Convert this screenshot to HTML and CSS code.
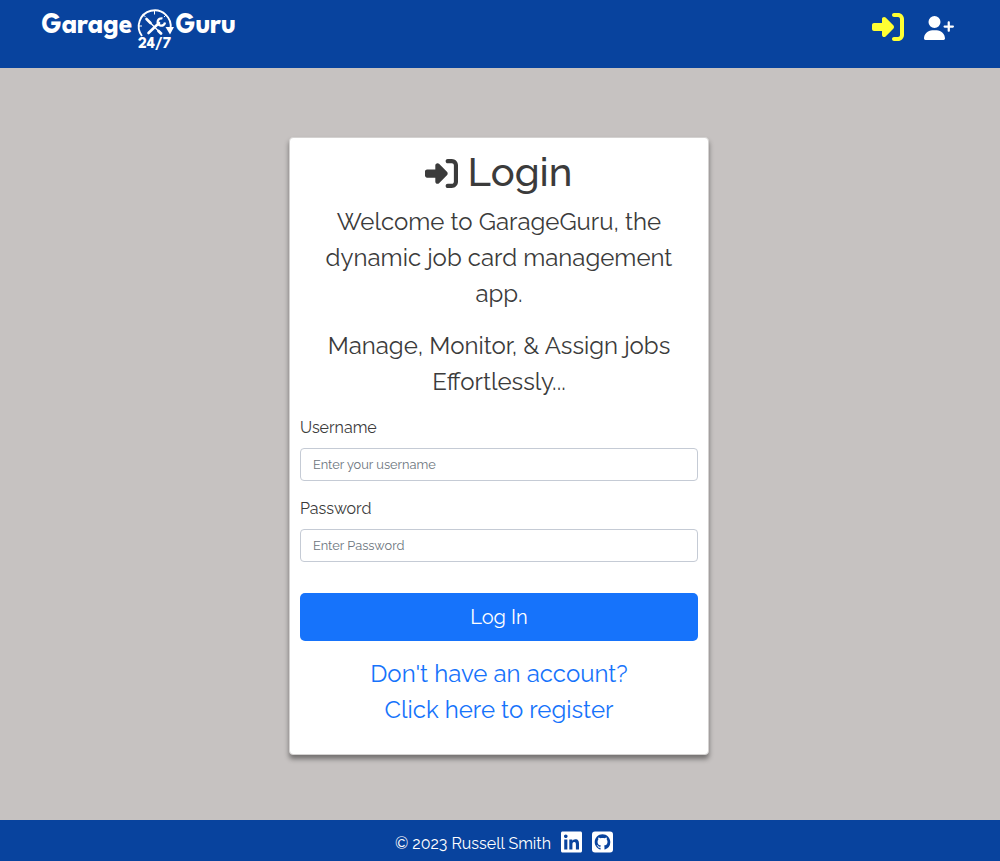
FILE: index.html
```html
<!DOCTYPE html>
<html lang="en">
<head>
<meta charset="utf-8">
<title>GarageGuru - Login</title>
<link rel="stylesheet" href="styles.css">
</head>
<body>
<svg width="0" height="0" class="defs">
  <symbol id="login-icon" viewBox="0 0 512 512"><path d="M217.9 105.9L340.7 228.7c7.2 7.2 11.3 17.1 11.3 27.3s-4.1 20.1-11.3 27.3L217.9 406.1c-6.4 6.4-15 9.9-24 9.9c-18.7 0-33.9-15.2-33.9-33.9l0-62.1L32 320c-17.7 0-32-14.3-32-32l0-64c0-17.7 14.3-32 32-32l128 0 0-62.1c0-18.7 15.2-33.9 33.9-33.9c9 0 17.6 3.6 24 9.9zM352 416l64 0c17.7 0 32-14.3 32-32l0-256c0-17.7-14.3-32-32-32l-64 0c-17.7 0-32-14.3-32-32s14.3-32 32-32l64 0c53 0 96 43 96 96l0 256c0 53-43 96-96 96l-64 0c-17.7 0-32-14.3-32-32s14.3-32 32-32z"/></symbol>
</svg>
<header class="topbar">
  <a class="logo" href="#" aria-label="Garage Guru 24/7">
    <svg width="200" height="54" viewBox="0 0 200 54">
      <g class="logo-word">
        <text x="0.500" y="32.500" textLength="91" lengthAdjust="spacingAndGlyphs">Garage</text>
        <text x="134.500" y="32.500" textLength="60.500" lengthAdjust="spacingAndGlyphs">Guru</text>
      </g>
      <text class="logo-hours" x="97" y="47.500" textLength="33" lengthAdjust="spacingAndGlyphs">24/7</text>
      <g fill="none" stroke="#fff">
        <path d="M101 36A16 16 0 1 1 129.500 29" stroke-width="1.900"/>
        <path d="M113.500 11v3.500M98 26h3M102.500 15l2 2M125 15l-2 2" stroke-width="1"/>
        <path d="M107 20.500L119.500 33" stroke-width="1.200"/>
        <path d="M105.500 19l4 4" stroke-width="2.600" stroke-linecap="round"/>
        <path d="M117.500 31l2.500 2.500" stroke-width="2.800" stroke-linecap="round"/>
        <path d="M107.500 33L118 23" stroke-width="2.600" stroke-linecap="round"/>
        <path d="M121.500 18.500a3.700 3.700 0 1 0 2.500 4" stroke-width="2.300"/>
      </g>
      <path d="M124.500 27h8.500l-4 7.500z" fill="#fff"/>
    </svg>
  </a>
  <nav class="nav">
    <a href="#" class="active" aria-label="Log in"><svg width="32" height="32"><use href="#login-icon"/></svg></a>
    <a href="#" class="signup" aria-label="Register"><svg width="30" height="24" viewBox="0 0 640 512"><path d="M96 128a128 128 0 1 1 256 0A128 128 0 1 1 96 128zM0 482.300C0 383.800 79.800 304 178.300 304h91.400C368.200 304 448 383.800 448 482.300c0 16.400-13.300 29.700-29.700 29.700H29.700C13.300 512 0 498.700 0 482.300zM504 312V248H440c-13.300 0-24-10.700-24-24s10.700-24 24-24h64V136c0-13.300 10.700-24 24-24s24 10.700 24 24v64h64c13.300 0 24 10.700 24 24s-10.700 24-24 24H552v64c0 13.300-10.700 24-24 24s-24-10.700-24-24z"/></svg></a>
  </nav>
</header>
<main class="page">
  <section class="card">
    <h1 class="title"><svg width="33" height="33"><use href="#login-icon"/></svg><span>Login</span></h1>
    <p class="lead">Welcome to GarageGuru, the dynamic job card management app.</p>
    <p class="lead">Manage, Monitor, &amp; Assign jobs Effortlessly...</p>
    <form>
      <label for="user">Username</label>
      <input id="user" type="text" placeholder="Enter your username">
      <label for="pass">Password</label>
      <input id="pass" type="password" placeholder="Enter Password">
      <button type="button">Log In</button>
    </form>
    <a class="register" href="#">Don't have an account?<br>Click here to register</a>
  </section>
</main>
<footer class="footer">
  <span class="copy">© 2023 Russell Smith</span>
  <a href="#" aria-label="LinkedIn"><svg width="21" height="24" viewBox="0 0 448 512"><path d="M416 32H31.900C14.300 32 0 46.500 0 64.300v383.400C0 465.500 14.300 480 31.900 480H416c17.600 0 32-14.500 32-32.300V64.300c0-17.800-14.400-32.300-32-32.300zM135.400 416H69V202.200h66.500V416zm-33.200-243c-21.300 0-38.500-17.300-38.500-38.500S80.900 96 102.200 96c21.200 0 38.500 17.300 38.500 38.500 0 21.300-17.200 38.500-38.500 38.500zm282.100 243h-66.400V312c0-24.800-.5-56.700-34.500-56.700-34.600 0-39.900 27-39.900 54.900V416h-66.400V202.200h63.700v29.200h.9c8.900-16.800 30.600-34.500 62.900-34.500 67.200 0 79.700 44.300 79.700 101.900V416z"/></svg></a>
  <a href="#" aria-label="GitHub"><svg width="21" height="24" viewBox="0 0 21 24"><rect y="1.500" width="21" height="21" rx="3"/><path class="mark" transform="translate(2.700 4.300) scale(.975)" d="M8 0C3.580 0 0 3.580 0 8c0 3.540 2.290 6.530 5.470 7.590.4.070.55-.17.55-.38 0-.19-.01-.82-.01-1.490-2.010.37-2.530-.49-2.690-.94-.09-.23-.48-.94-.82-1.130-.28-.15-.68-.52-.01-.53.63-.01 1.080.58 1.230.82.72 1.210 1.870.87 2.330.66.070-.52.28-.87.51-1.070-1.780-.2-3.640-.89-3.640-3.950 0-.87.31-1.590.82-2.150-.08-.2-.36-1.020.08-2.120 0 0 .67-.21 2.200.82.64-.18 1.320-.27 2-.27s1.360.09 2 .27c1.530-1.040 2.200-.82 2.200-.82.44 1.100.16 1.920.08 2.120.51.56.82 1.270.82 2.150 0 3.070-1.870 3.750-3.650 3.950.29.25.54.73.54 1.480 0 1.070-.01 1.930-.01 2.200 0 .21.15.46.55.38A8.010 8.010 0 0 0 16 8c0-4.420-3.580-8-8-8z"/></svg></a>
</footer>
</body>
</html>
```
FILE: styles.css
```css
* { box-sizing: border-box; }
body {
  margin: 0;
  min-height: 861px;
  display: flex;
  flex-direction: column;
  background: #c6c2c1;
  color: #3b3b3b;
  font: 400 16px/24px Raleway, Lato, sans-serif;
}
svg { display: block; fill: currentColor; }
a { color: inherit; text-decoration: none; }
.defs { display: none; }

.topbar {
  height: 68px;
  padding: 0 46px 0 41px;
  display: flex;
  justify-content: space-between;
  align-items: flex-start;
  background: #08439e;
  color: #fff;
}
.logo-word { font: 700 29.5px "League Spartan", Inter, sans-serif; fill: #fff; }
.logo-hours { font: 700 17px "League Spartan", Inter, sans-serif; fill: #fff; }
.nav { display: flex; align-items: center; gap: 20px; padding-top: 11px; }
.active { color: #ffff33; }
.signup { padding-top: 2px; }

.page { flex: 1; display: flex; justify-content: center; align-items: flex-start; padding: 69px 2px 0 0; }
.card {
  width: 420px;
  height: 618px;
  padding: 10px;
  border: 1px solid #d4d2d1;
  border-radius: 4px;
  background: #fff;
  box-shadow: 0 4px 5px rgba(0, 0, 0, .42);
  text-align: center;
}
.title {
  margin: 0 0 8px;
  height: 48px;
  display: flex;
  justify-content: center;
  align-items: center;
  gap: 10px;
  padding-right: 1px;
  font-size: 40px;
  line-height: 48px;
  font-weight: 500;
}
.title svg { margin-top: 3px; }
.lead { margin: 0 0 16px; padding: 0 16px; font-size: 24px; line-height: 36px; }
form { display: flex; flex-direction: column; text-align: left; }
label { margin-bottom: 8px; }
input {
  height: 33px;
  margin: 0 0 16px;
  padding: 0 12px 1px;
  border: 1px solid #c5cbd5;
  border-radius: 4px;
  background: #fff;
  font: 400 12.8px Raleway, Lato, sans-serif;
}
input::placeholder { color: #6c757d; opacity: 1; }
button {
  height: 48px;
  margin: 15px 0;
  padding: 0;
  border: 0;
  border-radius: 5px;
  background: #1673fb;
  color: #fff;
  font: 400 20px Raleway, Lato, sans-serif;
}
.register { display: block; color: #1673fb; font-size: 24px; line-height: 36px; }

.footer {
  height: 41px;
  padding: 2px 0 0 8px;
  display: flex;
  justify-content: center;
  align-items: center;
  gap: 10px;
  background: #08439e;
  color: #fff;
}
.copy { padding-top: 4px; font-variant-numeric: oldstyle-nums; }
.mark { fill: #08439e; }
```
